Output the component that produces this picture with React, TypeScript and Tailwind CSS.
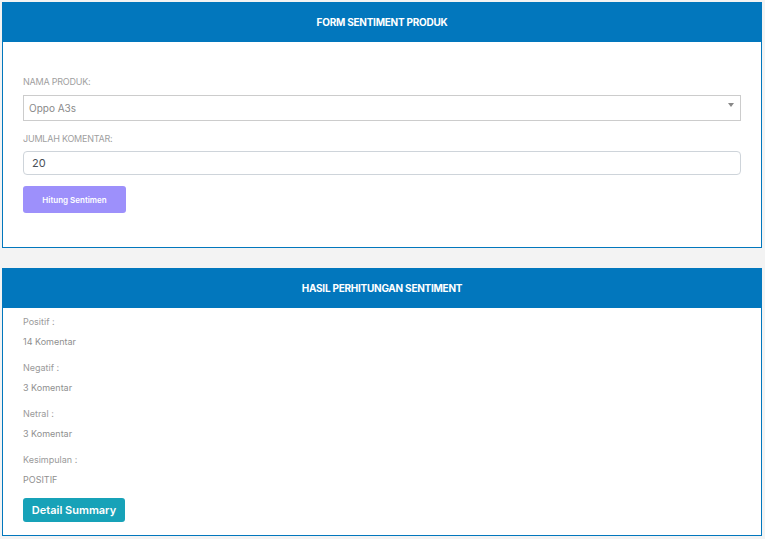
export default function App() {
  return (
    <div
      className="min-h-[539px] w-[765px] bg-[#f3f3f3] pt-[2px] pl-[2px] pr-[3px] pb-[2px]"
      style={{ fontFamily: 'Inter, "Noto Sans", sans-serif' }}
    >
      {/* Form card */}
      <div className="bg-white border border-[#0277bd] h-[246px]">
        <div className="bg-[#0277bd] h-[39px] flex items-center justify-center">
          <h2 className="text-white text-[10px] font-bold tracking-tight">FORM SENTIMENT PRODUK</h2>
        </div>
        <div className="px-5 pt-[34px]">
          <label className="block text-[9px] text-[#a0a0a0] leading-[12px] tracking-tight">NAMA PRODUK:</label>
          <div className="mt-[7px] h-[26px] border border-[#cccccc] flex items-center justify-between pl-[5px] pr-[6px]">
            <span className="text-[10px] text-[#8a8a8a]">Oppo A3s</span>
            <span className="w-0 h-0 border-l-[3px] border-r-[3px] border-t-[4px] border-l-transparent border-r-transparent border-t-[#888] mb-[6px]" />
          </div>
          <label className="block mt-[12px] text-[9px] text-[#a0a0a0] leading-[12px] tracking-tight">JUMLAH KOMENTAR:</label>
          <div className="mt-[6px] h-[24px] border border-[#ced4da] rounded-[4px] flex items-center pl-[8px]">
            <span className="text-[11px] text-[#495057]">20</span>
          </div>
          <button className="mt-[11px] w-[103px] h-[27px] bg-[#9d90fb] rounded-[3px] text-white text-[8px] font-semibold">
            Hitung Sentimen
          </button>
        </div>
      </div>

      {/* Result card */}
      <div className="mt-[20px] bg-white border border-[#0277bd] h-[268px]">
        <div className="bg-[#0277bd] h-[39px] flex items-center justify-center">
          <h2 className="text-white text-[10px] font-bold tracking-tight">HASIL PERHITUNGAN SENTIMENT</h2>
        </div>
        <div className="px-5 pt-[7px] text-[9px] text-[#9a9a9a]">
          <Item label="Positif :" value="14 Komentar" />
          <Item label="Negatif :" value="3 Komentar" />
          <Item label="Netral :" value="3 Komentar" />
          <Item label="Kesimpulan :" value="POSITIF" />
          <button className="-mt-px w-[102px] h-[24px] bg-[#17a2b8] rounded-[3px] text-white text-[11px] font-semibold">
            Detail Summary
          </button>
        </div>
      </div>
    </div>
  );
}

function Item({ label, value }: { label: string; value: string }) {
  return (
    <div className="h-[46px]">
      <p className="leading-[14px]">{label}</p>
      <p className="mt-[6px] leading-[14px] text-[#8f8f8f]">{value}</p>
    </div>
  );
}
